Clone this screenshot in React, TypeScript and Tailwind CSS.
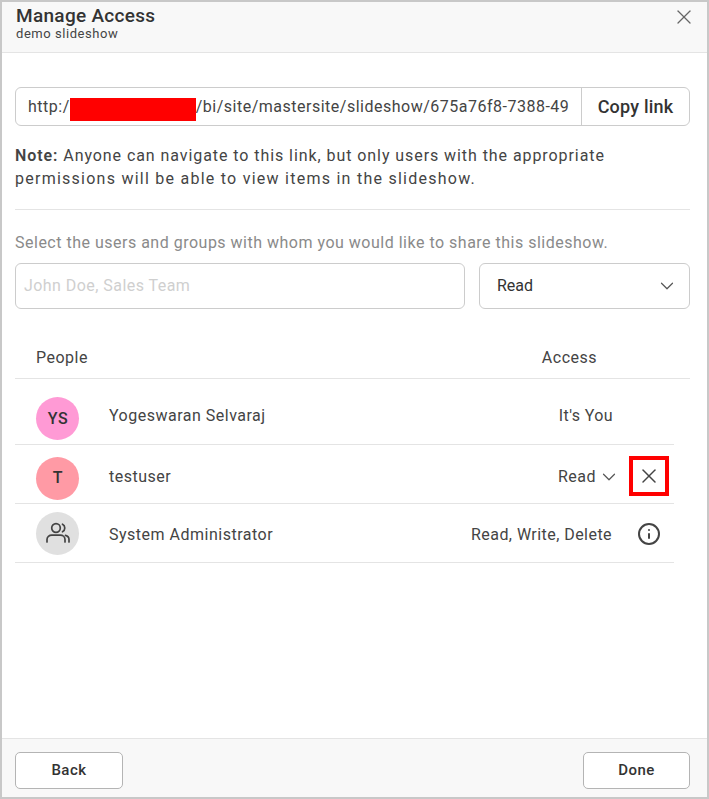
import React from "react";
import { ChevronDown, Info, X } from "lucide-react";

const font = "font-['Roboto',sans-serif]";

const App: React.FC = () => {
  return (
    <div
      className={`${font} flex h-[799px] w-[709px] flex-col overflow-hidden border-2 border-[#c8c8c8] bg-white text-[#333]`}
    >
      {/* Header */}
      <div className="flex h-[51px] shrink-0 justify-between border-b border-[#e4e4e4] bg-[#f8f8f8] pl-[14px] pr-[11px]">
        <div>
          <div className="pt-[3px] text-[19px] font-medium leading-[21px] tracking-[0.3px]">Manage Access</div>
          <div className="text-[13px] leading-[15px] tracking-[0.55px] text-[#444]">demo slideshow</div>
        </div>
        <X className="mt-[3px] h-[24px] w-[24px] text-[#666]" strokeWidth={1.3} />
      </div>

      {/* Body */}
      <div className="flex-1 px-[13px] pt-[34px]">
        <div className="flex h-[39px] w-[675px] rounded-[6px] border border-[#cccccc]">
          <div className="flex min-w-0 flex-1 items-center overflow-hidden whitespace-nowrap pl-[12px] text-[16px] tracking-[0.5px] text-[#444]">
            <span>http:/</span>
            <span className="mt-[6px] h-[23px] w-[126px] shrink-0 bg-[#ff0000]" />
            <span>/bi/site/mastersite/slideshow/675a76f8-7388-49</span>
          </div>
          <button className="w-[108px] shrink-0 border-l border-[#cccccc] text-[18px] font-medium tracking-[0.2px] text-[#333]">
            Copy link
          </button>
        </div>

        <p className="mt-[18px] w-[675px] whitespace-nowrap text-[16px] leading-[23px] text-[#444]">
          <span className="tracking-[0.93px]">
            <span className="font-semibold">Note:</span> Anyone can navigate to this link, but only users with the appropriate
          </span>
          <br />
          <span className="tracking-[1.25px]">permissions will be able to view items in the slideshow.</span>
        </p>

        <div className="mt-[19px] w-[675px] border-t border-[#e4e4e4]" />

        <p className="mt-[23px] text-[16px] leading-[20px] tracking-[0.5px] text-[#8a8a8a]">
          Select the users and groups with whom you would like to share this slideshow.
        </p>

        <div className="mt-[10px] flex w-[675px] gap-[14px]">
          <div className="flex h-[46px] w-[450px] items-center rounded-[6px] border border-[#cccccc] pl-[8px] text-[16px] tracking-[0.45px] text-[#cfcfcf]">
            John Doe, Sales Team
          </div>
          <div className="flex h-[46px] flex-1 items-center justify-between rounded-[6px] border border-[#cccccc] pl-[17px] pr-[11px] text-[16px] text-[#333]">
            <span>Read</span>
            <ChevronDown className="h-[22px] w-[22px] text-[#555]" strokeWidth={1.3} />
          </div>
        </div>

        {/* People table */}
        <div className="mt-[27px] flex h-[43px] w-[675px] items-start justify-between border-b border-[#e4e4e4] pl-[21px] pr-[93px] pt-[12px] text-[16px] leading-[20px] tracking-[0.5px] text-[#444]">
          <span>People</span>
          <span>Access</span>
        </div>

        <div className="flex h-[66px] w-[659px] items-center border-b border-[#e4e4e4] pl-[21px]">
          <div className="mt-[14px] flex h-[43px] w-[43px] shrink-0 items-center justify-center rounded-full bg-[#ff9ad5] pl-[1px] text-[16px] font-medium tracking-[0.5px] text-[#333]">
            YS
          </div>
          <span className="ml-[30px] mt-[8px] flex-1 text-[16px] tracking-[0.5px] text-[#444]">Yogeswaran Selvaraj</span>
          <span className="mr-[61px] mt-[8px] text-[16px] tracking-[0.4px] text-[#444]">It's You</span>
        </div>

        <div className="flex h-[59px] w-[659px] items-center border-b border-[#e4e4e4] pl-[21px]">
          <div className="mt-[8px] flex h-[43px] w-[43px] shrink-0 items-center justify-center rounded-full bg-[#ff9aa5] text-[16px] font-medium text-[#333]">
            T
          </div>
          <span className="ml-[30px] mt-[5px] flex-1 text-[16px] tracking-[0.5px] text-[#444]">testuser</span>
          <span className="mt-[5px] text-[16px] tracking-[0.5px] text-[#444]">Read</span>
          <ChevronDown className="ml-[2px] mt-[5px] h-[22px] w-[22px] text-[#555]" strokeWidth={1.3} />
          <div className="ml-[9px] mr-[5px] mt-[4px] flex h-[40px] w-[40px] items-center justify-center border-[4px] border-[#ff0000]">
            <X className="h-[24px] w-[24px] shrink-0 text-[#444]" strokeWidth={1.5} />
          </div>
        </div>

        <div className="flex h-[59px] w-[659px] items-center border-b border-[#e4e4e4] pl-[21px]">
          <div className="flex h-[43px] w-[43px] shrink-0 items-center justify-center rounded-full bg-[#e0e0e0]">
            <svg width="26" height="22" viewBox="0 0 26 22" fill="none" stroke="#444" strokeWidth="1.7" strokeLinecap="round">
              <circle cx="11" cy="6" r="4.3" />
              <path d="M2 20v-2.5c0-2.6 2.2-4.3 4.8-4.3h8.4c2.6 0 4.8 1.7 4.8 4.3V20" />
              <path d="M17.5 2.2a4.3 4.3 0 0 1 0 7.6" />
              <path d="M20.5 13.4c2 .5 3.5 2 3.5 4.1V20" />
            </svg>
          </div>
          <span className="ml-[30px] mt-[3px] flex-1 text-[16px] tracking-[0.5px] text-[#444]">System Administrator</span>
          <span className="mt-[3px] text-[16px] tracking-[0.45px] text-[#444]">Read, Write, Delete</span>
          <Info className="ml-[25px] mr-[13px] mt-[1px] h-[24px] w-[24px] text-[#444]" strokeWidth={2} />
        </div>
      </div>

      {/* Footer */}
      <div className="flex h-[59px] shrink-0 items-start justify-between border-t border-[#e4e4e4] bg-[#f8f8f8] pl-[13px] pr-[17px] pt-[13px]">
        <button className="h-[37px] w-[108px] rounded-[5px] border border-[#b4b4b4] bg-white text-[15px] font-medium tracking-[0.5px] text-[#333]">
          Back
        </button>
        <button className="h-[37px] w-[107px] rounded-[5px] border border-[#b4b4b4] bg-white text-[15px] font-medium tracking-[0.5px] text-[#333]">
          Done
        </button>
      </div>
    </div>
  );
};

export default App;
